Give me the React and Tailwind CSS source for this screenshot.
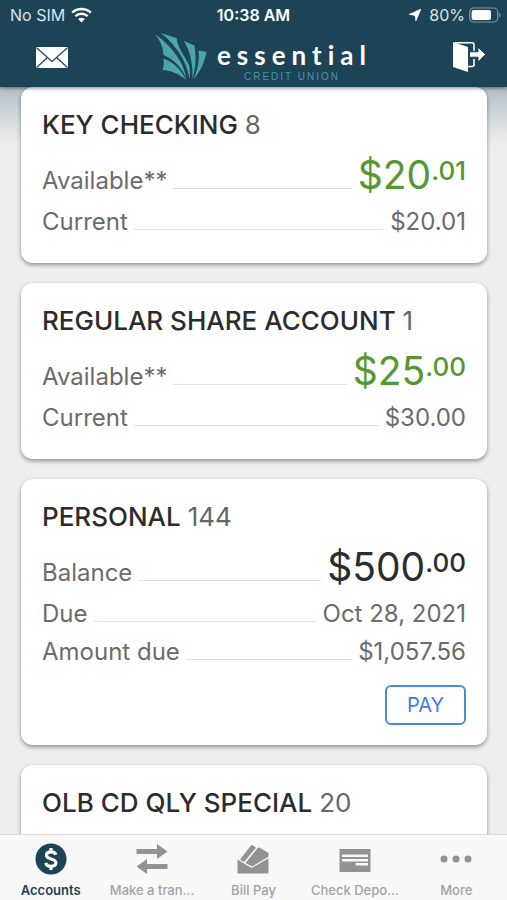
import React from "react";

const accounts = [
  {
    name: "KEY CHECKING",
    number: "8",
    lead: { label: "Available**", whole: "$20", cents: ".01" },
    positive: true,
    rows: [{ label: "Current", value: "$20.01" }],
  },
  {
    name: "REGULAR SHARE ACCOUNT",
    number: "1",
    lead: { label: "Available**", whole: "$25", cents: ".00" },
    positive: true,
    rows: [{ label: "Current", value: "$30.00" }],
  },
  {
    name: "PERSONAL",
    number: "144",
    lead: { label: "Balance", whole: "$500", cents: ".00" },
    positive: false,
    rows: [
      { label: "Due", value: "Oct 28, 2021" },
      { label: "Amount due", value: "$1,057.56" },
    ],
    payable: true,
  },
  {
    name: "OLB CD QLY SPECIAL",
    number: "20",
    rows: [],
  },
];

function StatusBar() {
  return (
    <div className="grid h-[30px] grid-cols-3 items-center px-2.5 text-base text-white">
      <div className="flex items-center gap-1.5">
        <span className="text-[#dbe3e7]">No SIM</span>
        <svg className="h-4 w-[21px]" viewBox="0 0 21 16" fill="none" stroke="white" aria-label="Wi-Fi">
          <path d="M1.2 5.6C6.4.7 14.6.7 19.8 5.6" strokeWidth="2.6" />
          <path d="M4.4 9.1c3.5-3.1 8.7-3.1 12.2 0" strokeWidth="2.5" />
          <path d="M10.5 15.4 7.2 12c1.9-1.6 4.7-1.6 6.6 0z" fill="white" stroke="none" />
        </svg>
      </div>
      <div className="text-center font-semibold">10:38 AM</div>
      <div className="flex items-center justify-end">
        <svg className="mr-2 h-3 w-3" viewBox="0 0 12 12" fill="white" aria-label="Location">
          <path d="M12 0 6.9 12 6 6.4 0 5.4z" stroke="white" strokeWidth=".6" />
        </svg>
        <span className="mr-1 text-[#dbe3e7]">80%</span>
        <svg className="-mr-1 h-4 w-8" viewBox="0 0 32 16" fill="none" aria-label="Battery">
          <rect x=".7" y="1" width="28" height="14" rx="4" stroke="#7f959f" strokeWidth="1.2" />
          <rect x="2.6" y="3" width="19.4" height="10" rx="2" fill="white" />
          <path d="M30.3 5.5c1.8.8 1.8 4.2 0 5z" fill="#7f959f" />
        </svg>
      </div>
    </div>
  );
}

function Logo() {
  return (
    <div className="flex items-start pl-1.5">
      <svg className="h-[50px] w-[52px]" viewBox="0 0 52 50" fill="#4ba5ab" aria-hidden="true">
        <path d="M0 2C5 9 8 14 8.500 23 20 28 27 36 31.500 47 29 31 18 15 0 2z" />
        <path d="M6 1l15.500 5C23 17 31 26 34 33c1.500 5 1 10 .5 14C32 30 22 14 6 1z" />
        <path d="M29 9l10.500 4.500C41.500 27 40.500 37 37.500 47 38 34 36 21 29 9z" />
        <path d="M43.500 18.500 51.500 20C49 32 45 40 38.500 47 43 37 44.500 28 43.500 18.500z" />
        <path d="M8.500 26.500C18 30 26 37 31 48 24 42 17 38.500 7.500 38 9 34 9 31 8.500 26.500z" />
      </svg>
      <div className="flex flex-col pt-[7px] pl-[10px]">
        <span className="font-[Lato,sans-serif] text-[26px] leading-[32px] font-bold tracking-[6px] text-white">essential</span>
        <span className="pl-[27px] font-['Liberation_Sans',sans-serif] text-[10px] leading-3 tracking-[2px] text-[#4199a3]">
          CREDIT UNION
        </span>
      </div>
    </div>
  );
}

function Header() {
  return (
    <header className="relative z-10 h-[87px] shrink-0 bg-[#1c4456] shadow-[0_1px_4px_rgba(0,0,0,0.5)]">
      <StatusBar />
      <div className="grid grid-cols-[1fr_auto_1fr] items-start pr-[22px] pl-9">
        <button type="button" aria-label="Messages" className="justify-self-start pt-[17px]">
          <svg className="h-[21px] w-8" viewBox="0 0 32 21" aria-hidden="true">
            <rect width="32" height="21" rx="1" fill="white" />
            <path d="M.5.800 16 14.500 31.500.800M.5 20.500 11.500 10.500M31.500 20.500 20.500 10.500" fill="none" stroke="#1c4456" strokeWidth="1.200" />
          </svg>
        </button>
        <div className="pt-0.5">
          <Logo />
        </div>
        <button type="button" aria-label="Log out" className="justify-self-end pt-[11px]">
          <svg className="h-8 w-8" viewBox="0 0 32 32" aria-hidden="true">
            <path d="M2 1.800h17q2 0 2 2v6M21 18v5.500q0 2-2 2h-4" fill="none" stroke="white" strokeWidth="1.600" />
            <path d="M0 1l15 5v25L0 26z" fill="white" />
            <path d="M16.500 10.800H25V6l7.500 7.500L25 21v-4.800h-8.500z" fill="white" stroke="#1c4456" strokeWidth="1" />
          </svg>
        </button>
      </div>
    </header>
  );
}

function Leader() {
  return <div className="flex-1 border-b border-[#e2e2e2]" />;
}

function AccountCard({ account }) {
  const amountColor = account.positive ? "text-[#559732]" : "text-[#2c2c2c]";
  return (
    <section className="min-h-[176px] rounded-xl bg-white px-[21px] py-5 shadow-[0_2px_4px_rgba(0,0,0,0.4)]">
      <h2 className="text-[26px] leading-9 font-medium text-[#2c2c2c]">
        {account.name} <span className="font-normal text-[#666]">{account.number}</span>
      </h2>
      {account.lead && (
        <dl className="pb-0.5 text-2xl text-[#6b6b6b]">
          <div className="flex h-[60px] items-baseline gap-1.5">
            <dt className="leading-[30px]">{account.lead.label}</dt>
            <Leader />
            <dd className={`flex items-start leading-[64px] ${amountColor}`}>
              <span className="text-[39px]">{account.lead.whole}</span>
              <span className="text-[26px] leading-[56px] font-medium">{account.lead.cents}</span>
            </dd>
          </div>
          {account.rows.map((row) => (
            <div key={row.label} className="flex items-baseline gap-1.5 leading-[38px]">
              <dt>{row.label}</dt>
              <Leader />
              <dd>{row.value}</dd>
            </div>
          ))}
        </dl>
      )}
      {account.payable && (
        <div className="flex justify-end pt-3">
          <button type="button" className="h-10 w-[81px] rounded-md border-2 border-[#4a87ee] text-xl text-[#3b7ded]">
            PAY
          </button>
        </div>
      )}
    </section>
  );
}

function AccountsIcon() {
  return (
    <svg className="h-8 w-8" viewBox="0 0 32 32" aria-hidden="true">
      <circle cx="16" cy="16" r="15.500" fill="#1c4456" />
      <path d="M20.800 11.800c-.6-2-2.300-3-4.800-3-2.700 0-4.500 1.300-4.500 3.400 0 4.900 9.400 2.600 9.400 7.600 0 2.200-2 3.500-4.900 3.500-2.800 0-4.700-1.200-5.200-3.500M16 5v4M16 23v4" fill="none" stroke="white" strokeWidth="3.200" />
    </svg>
  );
}

function TransferIcon() {
  return (
    <svg className="h-8 w-8" viewBox="0 0 32 32" fill="#929292" aria-hidden="true">
      <path d="M.5 6H21V1l10.500 7.500L21 16v-5H.500z" />
      <path d="M31.500 21H11v-5L.5 23.500 11 31v-5h20.500z" />
    </svg>
  );
}

function BillPayIcon() {
  return (
    <svg className="h-8 w-8" viewBox="0 0 32 32" fill="#929292" aria-hidden="true">
      <path d="M.5 16.500 14.500 25 31.500 15.500v15H.5z" />
      <path d="M3 16.500 14 2.500q1-1 2 0l3 2.200L7 19z" />
      <path d="M8.500 20 20.500 5.200q1-1.200 2.300-.4L31.500 10v3.800L15 23.500z" />
    </svg>
  );
}

function CheckIcon() {
  return (
    <svg className="h-8 w-8" viewBox="0 0 32 32" aria-hidden="true">
      <path d="M.5 6h31v23H.500z" fill="#929292" />
      <path d="M3 11.500h26v2.500H3zM3 16h26v2.500H3zM16.500 20H29v2.500H16.500z" fill="#f8f8f8" />
    </svg>
  );
}

function MoreIcon() {
  return (
    <svg className="h-8 w-8" viewBox="0 0 32 32" fill="#929292" aria-hidden="true">
      <circle cx="4" cy="16" r="3.500" />
      <circle cx="16" cy="16" r="3.500" />
      <circle cx="28" cy="16" r="3.500" />
    </svg>
  );
}

const tabs = [
  { label: "Accounts", Icon: AccountsIcon, active: true },
  { label: "Make a tran...", Icon: TransferIcon },
  { label: "Bill Pay", Icon: BillPayIcon },
  { label: "Check Depo...", Icon: CheckIcon },
  { label: "More", Icon: MoreIcon },
];

function TabBar() {
  return (
    <nav className="relative z-10 grid h-[66px] shrink-0 grid-cols-5 border-t border-[#dcdcdc] bg-[#f8f8f8]">
      {tabs.map(({ label, Icon, active }) => (
        <a
          key={label}
          href="#"
          aria-current={active ? "page" : undefined}
          className={`flex flex-col items-center gap-1.5 pt-2 text-[13px] leading-[18px] whitespace-nowrap ${
            active ? "font-semibold text-[#1c4456]" : "font-medium text-[#a3a3a3]"
          }`}
        >
          <Icon />
          {label}
        </a>
      ))}
    </nav>
  );
}

export default function App() {
  return (
    <div className="flex h-screen flex-col bg-[#eeeeee] font-[Inter,'Liberation_Sans',sans-serif]">
      <Header />
      <main className="flex min-h-0 flex-1 flex-col gap-5 overflow-y-auto bg-[linear-gradient(#b4c0c6,#eeeeee_58px)] pr-5 pl-[21px] [scrollbar-width:none] *:shrink-0">
        {accounts.map((account) => (
          <AccountCard key={account.name} account={account} />
        ))}
      </main>
      <TabBar />
    </div>
  );
}
